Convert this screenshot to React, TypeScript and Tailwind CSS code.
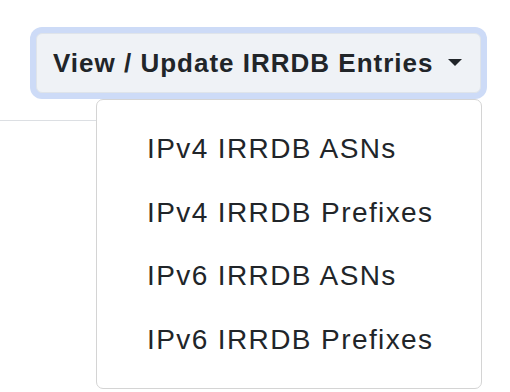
import React from "react";

export default function App() {
  const items = ["IPv4 IRRDB ASNs", "IPv4 IRRDB Prefixes", "IPv6 IRRDB ASNs", "IPv6 IRRDB Prefixes"];
  return (
    <div
      className="relative w-[510px] h-[392px] bg-white overflow-hidden text-[#212529]"
      style={{ fontFamily: '"Liberation Sans", Arial, sans-serif' }}
    >
      <div className="flex justify-end pt-[33px] pr-[29px]">
        <button className="flex items-center h-[60px] w-[445px] pl-[16px] pr-[18px] rounded-[6px] bg-[#eff2f6] border border-[#dfe4ea] shadow-[0_0_0_6px_#cddbf7] text-[26px] tracking-[1px] font-bold">
          <span className="flex-1 text-left">View / Update IRRDB Entries</span>
          <svg width="14" height="7" viewBox="0 0 14 7" className="mb-[2px]">
            <path d="M0 0 L14 0 L7 7 Z" fill="#212529" />
          </svg>
        </button>
      </div>
      <div className="mt-[27px] w-[482px] border-b border-[#dcdfe3]" />
      <div className="absolute left-[96px] top-[99px] w-[386px] h-[290px] bg-white border border-[#d4d4d4] rounded-[7px] py-[17px]">
        {items.map((t) => (
          <div key={t} className="h-[63.5px] leading-[63.5px] pl-[50px] text-[28px] tracking-[1.4px]">
            {t}
          </div>
        ))}
      </div>
    </div>
  );
}
